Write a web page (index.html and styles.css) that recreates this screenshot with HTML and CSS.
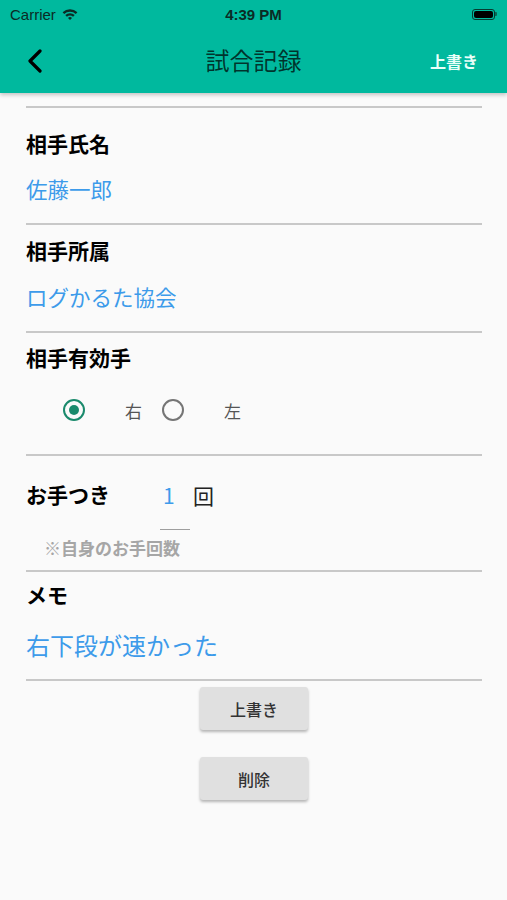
FILE: index.html
```html
<!DOCTYPE html>
<html lang="ja">
<head>
    <meta charset="UTF-8">
    <meta name="viewport" content="width=device-width, initial-scale=1.0">
    <title>試合記録</title>
    <link rel="stylesheet" href="styles.css">
</head>
<body>
    <header class="appbar">
        <div class="status">
            <div class="status-left">
                <span>Carrier</span>
                <svg class="wifi" viewBox="0 0 16 12" width="16" height="12">
                    <path d="M0.6 4.2 A11 11 0 0 1 15.4 4.2 L13.8 5.9 A8.6 8.6 0 0 0 2.2 5.9 Z" fill="#0b2b25"/>
                    <path d="M3.3 7.1 A7 7 0 0 1 12.7 7.1 L11.1 8.8 A4.7 4.7 0 0 0 4.9 8.8 Z" fill="#0b2b25"/>
                    <path d="M6 10 A3 3 0 0 1 10 10 L8 12 Z" fill="#0b2b25"/>
                </svg>
            </div>
            <div class="status-time">4:39 PM</div>
            <div class="status-right">
                <div class="battery"><div class="battery-level"></div></div>
                <div class="battery-nub"></div>
            </div>
        </div>
        <div class="toolbar">
            <div class="nav-left">
                <svg class="back" viewBox="0 0 16 24" width="16" height="24">
                    <polyline points="13,2 3,12 13,22" fill="none" stroke="#000" stroke-width="3.2" stroke-linecap="round" stroke-linejoin="round"/>
                </svg>
            </div>
            <div class="title">試合記録</div>
            <div class="action">上書き</div>
        </div>
    </header>

    <main class="form">
        <section class="field field-first">
            <div class="label">相手氏名</div>
            <div class="value">佐藤一郎</div>
        </section>

        <section class="field field-org">
            <div class="label">相手所属</div>
            <div class="value">ログかるた協会</div>
        </section>

        <section class="field field-hand">
            <div class="label">相手有効手</div>
            <div class="radios">
                <div class="option">
                    <span class="radio checked"></span>
                    <span class="option-text">右</span>
                </div>
                <div class="option">
                    <span class="radio"></span>
                    <span class="option-text">左</span>
                </div>
            </div>
        </section>

        <section class="field field-otetsuki">
            <div class="count-row">
                <div class="label count-label">お手つき</div>
                <div class="count-input">1</div>
                <div class="count-unit">回</div>
            </div>
            <div class="note">※自身のお手回数</div>
        </section>

        <section class="field field-memo">
            <div class="label">メモ</div>
            <div class="value memo">右下段が速かった</div>
        </section>

        <div class="buttons">
            <button class="btn">上書き</button>
            <button class="btn">削除</button>
        </div>
    </main>
</body>
</html>
```

FILE: styles.css
```css
* {
    box-sizing: border-box;
}
body {
    margin: 0;
    background: #fafafa;
    font-family: "Noto Sans CJK JP", "Liberation Sans", sans-serif;
    color: #000;
}
.appbar {
    background: #00b99e;
    height: 93px;
    box-shadow: 0 2px 4px rgba(0,0,0,0.22);
    position: relative;
}
.status {
    height: 28px;
    display: flex;
    align-items: center;
    justify-content: space-between;
    padding: 0 10px;
    font-family: "Liberation Sans", Arial, sans-serif;
    font-size: 15px;
    color: #0b2b25;
}
.status-left {
    display: flex;
    align-items: center;
    gap: 6px;
    width: 120px;
}
.status-time {
    font-weight: bold;
}
.status-right {
    width: 120px;
    display: flex;
    justify-content: flex-end;
    align-items: center;
}
.battery {
    width: 23px;
    height: 11px;
    border: 1px solid #063b31;
    border-radius: 3px;
    padding: 1px;
}
.battery-level {
    width: 100%;
    height: 100%;
    background: #000;
    border-radius: 2px;
}
.battery-nub {
    width: 2px;
    height: 4px;
    background: #0a6a58;
    border-radius: 0 1px 1px 0;
}
.toolbar {
    height: 65px;
    display: flex;
    align-items: center;
    justify-content: space-between;
    padding: 0 29px 0 27px;
}
.nav-left {
    width: 80px;
    display: flex;
    align-items: center;
}
.back {
    display: block;
}
.title {
    font-size: 24px;
    color: rgba(0,0,0,0.72);
    margin-left: 2px;
    margin-top: -2px;
}
.action {
    width: 80px;
    text-align: right;
    font-size: 16px;
    font-weight: bold;
    color: #eafff9;
}

.form {
    padding: 13px 25px 30px 26px;
}
.field {
    border-top: 2px solid #c8c8c8;
}
.label {
    font-size: 21px;
    font-weight: bold;
    line-height: 28px;
}
.value {
    font-size: 21.5px;
    line-height: 28px;
    color: #3d9bea;
}
.field-first {
    padding: 21px 0 20px;
}
.field-first .value {
    margin-top: 18px;
}
.field-org {
    padding: 11px 0 20px;
}
.field-org .value {
    margin-top: 19px;
}
.field-hand {
    padding: 10px 0 24px;
}
.radios {
    display: flex;
    height: 40px;
    margin-top: 19px;
    padding-left: 37px;
    align-items: center;
}
.option {
    width: 99px;
    display: flex;
    align-items: center;
}
.radio {
    width: 22px;
    height: 22px;
    border-radius: 50%;
    border: 2.5px solid #757575;
    margin-right: 40px;
    position: relative;
}
.radio.checked {
    border-color: #1a8a6c;
}
.radio.checked::after {
    content: "";
    position: absolute;
    left: 3.5px;
    top: 3.5px;
    width: 10px;
    height: 10px;
    border-radius: 50%;
    background: #1a8a6c;
}
.option-text {
    font-size: 17px;
    color: #555;
}
.field-otetsuki {
    padding: 24px 0 12px;
}
.count-row {
    display: flex;
    align-items: flex-start;
}
.count-label {
    width: 134px;
}
.count-input {
    width: 30px;
    padding: 1px 0 20px 3px;
    font-size: 21px;
    line-height: 28px;
    color: #3d9bea;
    border-bottom: 1.5px solid #9e9e9e;
}
.count-unit {
    margin-left: 3px;
    padding-top: 1px;
    font-size: 21px;
    line-height: 28px;
    color: #222;
}
.note {
    margin: 8px 0 0 18px;
    font-size: 17px;
    font-weight: bold;
    line-height: 20px;
    color: #a6a6a6;
}
.field-memo {
    padding: 8px 0 19px;
    border-bottom: 2px solid #c8c8c8;
}
.memo {
    font-size: 24px;
    line-height: 30px;
    margin-top: 22px;
}
.buttons {
    display: flex;
    flex-direction: column;
    align-items: center;
    gap: 27px;
    padding-top: 6px;
}
.btn {
    width: 108px;
    height: 43px;
    border: none;
    border-radius: 3px;
    background: #e0e0e0;
    box-shadow: 0 2px 3px rgba(0,0,0,0.28);
    font-family: "Noto Sans CJK JP", sans-serif;
    font-size: 16px;
    font-weight: 500;
    color: #333;
}
```
